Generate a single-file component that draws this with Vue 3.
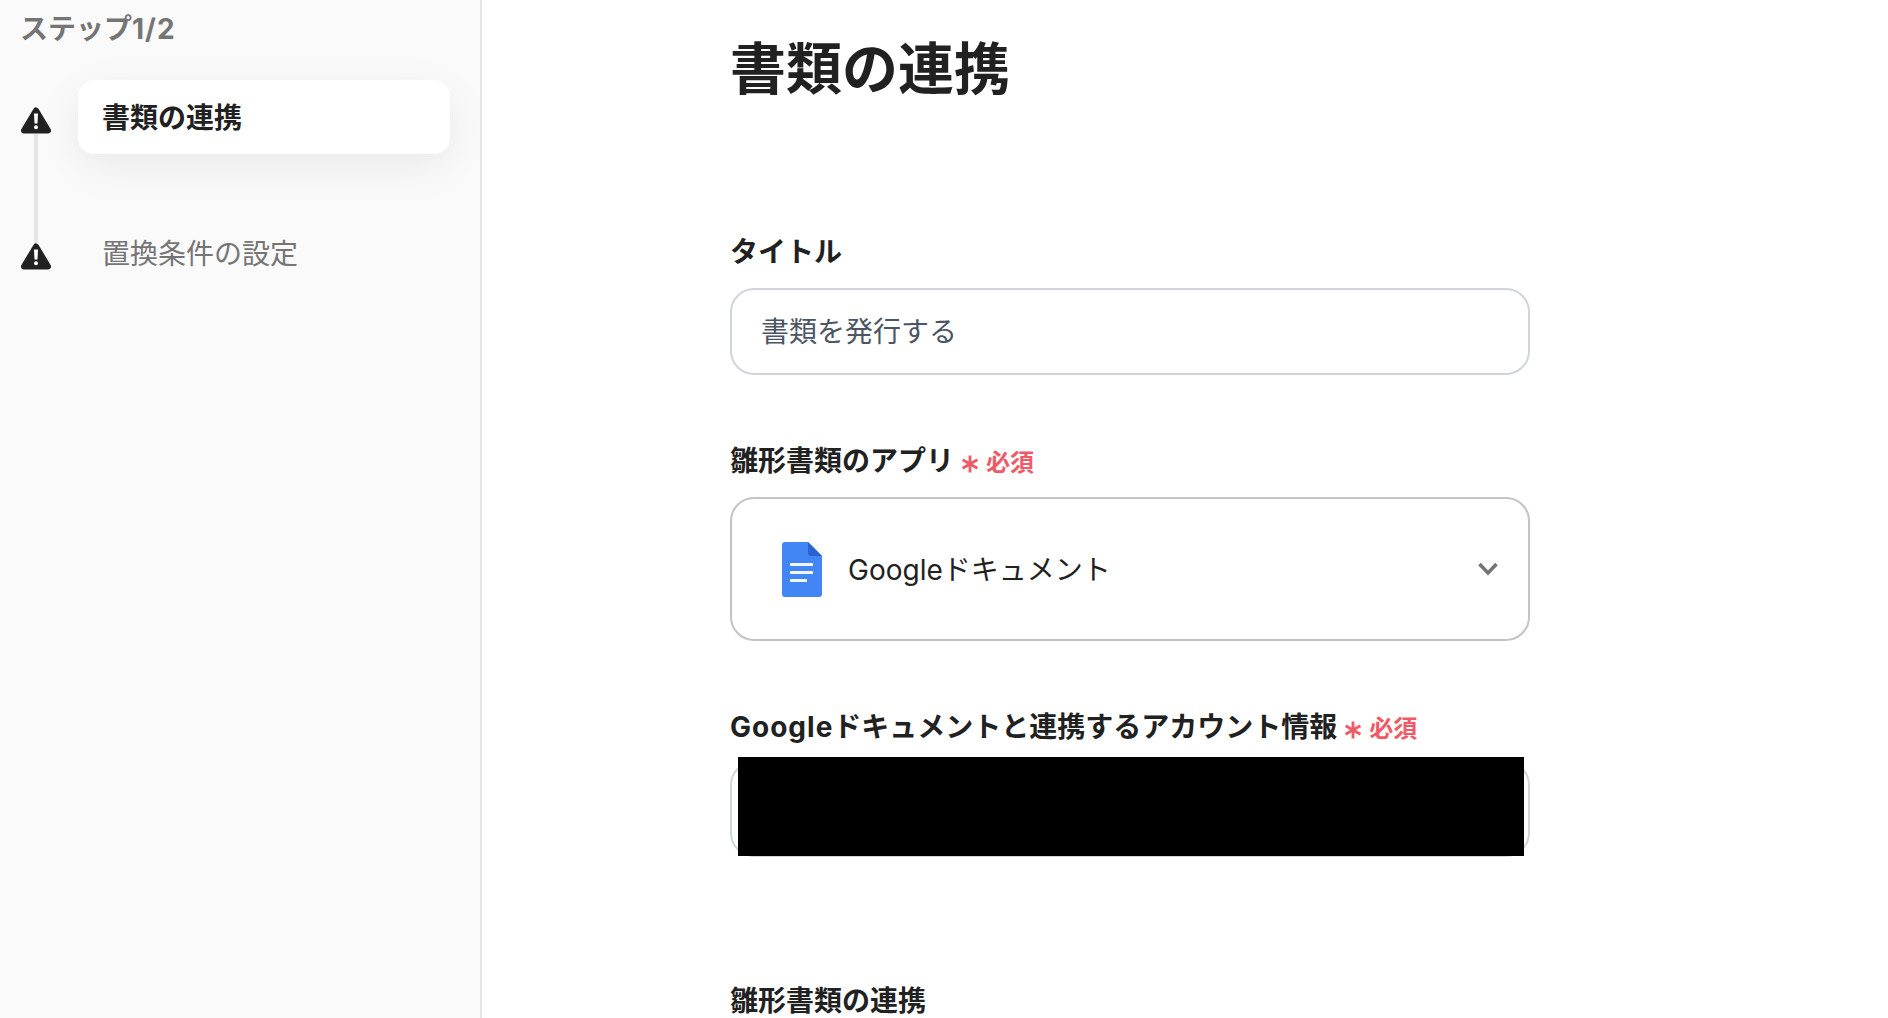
<script setup>
const steps = [
  { label: '書類の連携', active: true },
  { label: '置換条件の設定', active: false },
]
</script>

<template>
  <div class="page" lang="ja">
    <aside class="sidebar">
      <div class="step-count">ステップ<span class="latin">1/2</span></div>
      <ol class="steps">
        <li v-for="(step, i) in steps" :key="step.label" class="step">
          <div class="marker" :class="{ linked: i < steps.length - 1 }">
            <svg class="warn" viewBox="0 0 30 27" width="30" height="27">
              <path d="M15 3.5 L27 23.5 H3 Z" fill="#212121" stroke="#212121" stroke-width="6" stroke-linejoin="round" />
              <path d="M13 6.5 h4 l-.5 10 h-3 z" fill="#fff" />
              <circle cx="15" cy="20.2" r="2" fill="#fff" />
            </svg>
          </div>
          <div class="step-label" :class="{ active: step.active }">{{ step.label }}</div>
        </li>
      </ol>
    </aside>

    <main class="main">
      <h1 class="title">書類の連携</h1>

      <section class="field first">
        <label class="label">タイトル</label>
        <div class="box input">書類を発行する</div>
      </section>

      <section class="field second">
        <label class="label">
          雛形書類のアプリ
          <span class="required">
            <svg class="star" viewBox="0 0 18 18" width="18" height="18">
              <path d="M9 0.5 V17.5 M1.6 4.7 L16.4 13.3 M16.4 4.7 L1.6 13.3" stroke="#ef5a66" stroke-width="2.8" fill="none" />
            </svg>
            必須
          </span>
        </label>
        <div class="box select">
          <svg class="doc" viewBox="0 0 40 55" width="40" height="55">
            <path d="M3 0 H26 L40 14 V52 a3 3 0 0 1 -3 3 H3 a3 3 0 0 1 -3 -3 V3 a3 3 0 0 1 3 -3 Z" fill="#4285f4" />
            <path d="M26 0 L40 14 H29 a3 3 0 0 1 -3 -3 Z" fill="#2a62cf" />
            <path d="M8 21 H31 V24 H8 Z M8 29 H31 V32 H8 Z M8 37 H25 V40 H8 Z" fill="#f1f5fd" />
          </svg>
          <span class="select-text">Googleドキュメント</span>
          <svg class="chevron" viewBox="0 0 20 14" width="20" height="14">
            <path d="M1.5 2 L10 11 L18.5 2" fill="none" stroke="#757575" stroke-width="3.6" />
          </svg>
        </div>
      </section>

      <section class="field third">
        <label class="label">
          <span class="latin">Google</span>ドキュメントと連携するアカウント情報
          <span class="required">
            <svg class="star" viewBox="0 0 18 18" width="18" height="18">
              <path d="M9 0.5 V17.5 M1.6 4.7 L16.4 13.3 M16.4 4.7 L1.6 13.3" stroke="#ef5a66" stroke-width="2.8" fill="none" />
            </svg>
            必須
          </span>
        </label>
        <div class="box account">
          <div class="redaction"></div>
        </div>
      </section>

      <section class="field fourth">
        <label class="label last">雛形書類の連携</label>
      </section>
    </main>
  </div>
</template>

<style>
html, body { margin: 0; padding: 0; background: #fff; overflow: hidden; }
</style>

<style scoped>
.page {
  display: flex;
  height: 1018px;
  overflow: hidden;
  font-family: "Inter", "Noto Sans CJK JP", sans-serif;
  color: #212121;
  background: #fff;
}
.sidebar {
  box-sizing: border-box;
  width: 482px;
  flex: none;
  padding: 9px 30px 0 20px;
  background: #fafafa;
  border-right: 2px solid #e5e5e5;
}
.step-count {
  font-size: 28px;
  line-height: 40px;
  font-weight: 700;
  color: #757575;
}
.latin { letter-spacing: 1px; }
.steps {
  list-style: none;
  margin: 31px 0 0;
  padding: 0;
}
.step {
  display: flex;
  gap: 27px;
  height: 136px;
}
.marker {
  position: relative;
  width: 30px;
  flex: none;
  padding-top: 27px;
  margin-left: 1px;
}
.marker.linked::after {
  content: "";
  position: absolute;
  left: 13px;
  top: 54px;
  width: 4px;
  height: 109px;
  background: #e5e5e5;
}
.warn { display: block; }
.step-label {
  box-sizing: border-box;
  flex: 1;
  height: 74px;
  padding: 0 24px;
  font-size: 28px;
  line-height: 76px;
  color: #757575;
  border-radius: 16px;
}
.step-label.active {
  background: #fff;
  color: #212121;
  font-weight: 700;
  box-shadow: 0 12px 40px rgba(0, 0, 0, 0.07);
}
.main {
  flex: 1;
  padding-left: 248px;
}
.title {
  margin: 29px 0 0;
  font-size: 56px;
  line-height: 80px;
  font-weight: 700;
}
.field { width: 800px; }
.first { margin-top: 123px; }
.second { margin-top: 66px; }
.third { margin-top: 66px; }
.fourth { margin-top: 128px; }
.label {
  display: flex;
  align-items: center;
  font-size: 28px;
  line-height: 40px;
  font-weight: 700;
  white-space: nowrap;
}
.label.last { line-height: 32px; }
.required {
  display: inline-flex;
  align-items: center;
  gap: 7px;
  margin-left: 7px;
  padding-top: 4px;
  font-size: 24px;
  line-height: 36px;
  color: #ef5a66;
}
.star { display: block; margin-top: 2px; }
.box {
  box-sizing: border-box;
  border: 2px solid #d1d5db;
  border-radius: 24px;
  background: #fff;
}
.input {
  height: 87px;
  margin-top: 16px;
  padding-left: 29px;
  font-size: 28px;
  line-height: 85px;
  color: #4b5563;
}
.select {
  display: flex;
  align-items: center;
  height: 144px;
  margin-top: 16px;
  padding: 0 30px 0 50px;
  border-color: #c4c4c4;
}
.doc { flex: none; }
.select-text {
  flex: 1;
  margin-left: 26px;
  padding-bottom: 2px;
  font-size: 28px;
}
.chevron { flex: none; }
.account {
  position: relative;
  height: 96px;
  margin-top: 14px;
}
.redaction {
  position: absolute;
  left: 6px;
  top: -6px;
  width: 786px;
  height: 99px;
  background: #000;
}
</style>
